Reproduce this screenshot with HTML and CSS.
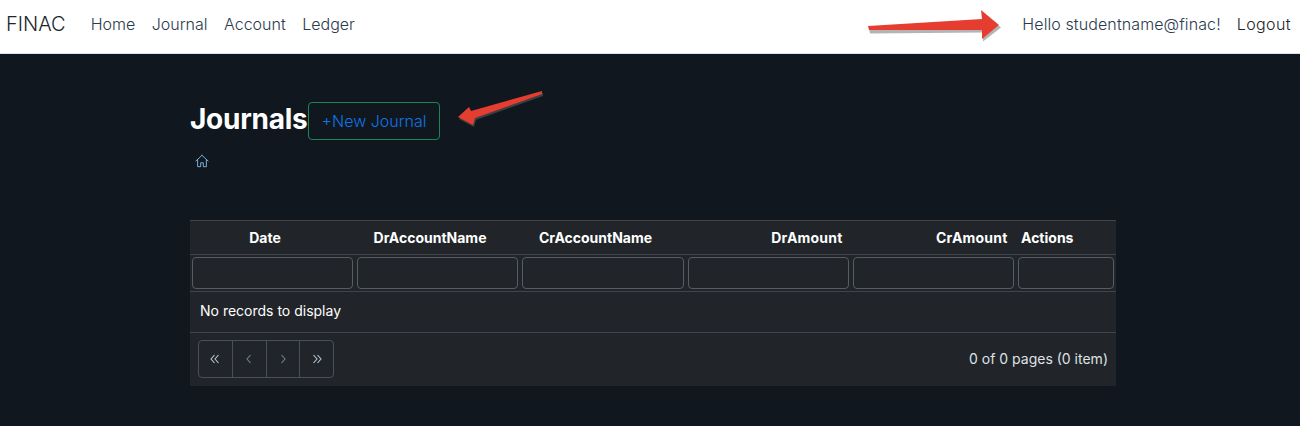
FILE: index.html
```html
<!DOCTYPE html>
<html lang="en">
<head>
<meta charset="utf-8">
<title>Journals</title>
<link rel="stylesheet" href="styles.css">
</head>
<body>
<nav class="navbar">
  <a class="brand">FINAC</a>
  <ul class="nav-links">
    <li>Home</li>
    <li>Journal</li>
    <li>Account</li>
    <li>Ledger</li>
  </ul>
  <div class="nav-right">
    <span class="hello">Hello studentname@finac!</span>
    <span class="logout">Logout</span>
  </div>
</nav>
<main class="content">
  <div class="title-row">
    <h1 class="title">Journals</h1>
    <button class="new-btn">+New Journal</button>
  </div>
  <div class="crumb">
    <svg class="home-icon" viewBox="0 0 16 16" width="14" height="14"><path d="M8 1.5 L1 8 M8 1.5 L15 8 M3 6.5 V14.5 H6.5 V10 H9.5 V14.5 H13 V6.5" fill="none" stroke="#7db4e0" stroke-width="1.1" stroke-linejoin="round" stroke-linecap="round"/></svg>
  </div>
  <div class="grid">
    <table class="data">
      <colgroup>
        <col class="c-wide"><col class="c-wide"><col class="c-mid"><col class="c-wide"><col class="c-wide"><col class="c-act">
      </colgroup>
      <thead>
        <tr class="head">
          <th class="center">Date</th>
          <th class="center">DrAccountName</th>
          <th class="center">CrAccountName</th>
          <th class="right">DrAmount</th>
          <th class="right">CrAmount</th>
          <th class="left">Actions</th>
        </tr>
        <tr class="filters">
          <td><input class="filter" aria-label="Date"></td>
          <td><input class="filter" aria-label="DrAccountName"></td>
          <td><input class="filter" aria-label="CrAccountName"></td>
          <td><input class="filter" aria-label="DrAmount"></td>
          <td><input class="filter" aria-label="CrAmount"></td>
          <td><input class="filter" aria-label="Actions"></td>
        </tr>
      </thead>
      <tbody>
        <tr class="empty"><td colspan="6">No records to display</td></tr>
      </tbody>
    </table>
    <div class="pager">
      <div class="pages">
        <button class="page strong"><svg viewBox="0 0 12 12" width="12" height="12"><path d="M5.5 2 L2 6 L5.5 10 M9.5 2 L6 6 L9.5 10" /></svg></button>
        <button class="page dim"><svg viewBox="0 0 12 12" width="12" height="12"><path d="M7.5 2 L4 6 L7.5 10" /></svg></button>
        <button class="page dim"><svg viewBox="0 0 12 12" width="12" height="12"><path d="M4.5 2 L8 6 L4.5 10" /></svg></button>
        <button class="page strong"><svg viewBox="0 0 12 12" width="12" height="12"><path d="M2.5 2 L6 6 L2.5 10 M6.5 2 L10 6 L6.5 10" /></svg></button>
      </div>
      <span class="summary">0 of 0 pages (0 item)</span>
    </div>
  </div>
</main>
<svg class="arrow arrow-top" viewBox="0 0 140 42" width="140" height="42"><path d="M0 26 L114 19 L113 10 L132 25 L114 39 L114 30 L1 31 Z" fill="#8c8c8c" opacity=".65" transform="translate(1 1.5)"/><path d="M0 25 L114 18 L113 9 L131 24 L114 38 L114 29 L1 29 Z" fill="#e53e30"/></svg>
<svg class="arrow arrow-mid" viewBox="0 0 90 42" width="90" height="42"><path d="M0 27 L11 17 L13 21 L84 1 L84 4 L17 28 L15 35 Z" fill="#5a5a5a" opacity=".6" transform="translate(1 2)"/><path d="M0 27 L11 17 L13 21 L84 1 L84 4 L17 28 L15 35 Z" fill="#e53e30"/></svg>
</body>
</html>
```
FILE: styles.css
```css
* { box-sizing: border-box; }
html, body { margin: 0; height: 100%; }
body {
  background: #11171f;
  color: #fff;
  font-family: Inter, "Liberation Sans", sans-serif;
  font-size: 16px;
  font-weight: 300;
  position: relative;
  overflow: hidden;
}
.navbar {
  display: flex;
  align-items: center;
  height: 54px;
  background: #fff;
  border-bottom: 1px solid #dee2e6;
  padding: 0 9px 6px 6px;
  color: #212529;
}
.brand { font-size: 20px; margin-right: 25px; color: #212529; }
.nav-links {
  display: flex;
  gap: 16.5px;
  list-style: none;
  margin: 0;
  padding: 0;
  color: #2b3a4d;
}
.nav-right { margin-left: auto; display: flex; gap: 16px; }
.hello { color: #2b3a4d; letter-spacing: .1px; }
.logout { color: #212529; letter-spacing: .4px; }
.content { padding: 48px 184px 0 190px; }
.title-row { display: flex; align-items: center; height: 38px; }
.title { margin: -4px 0 0; font-size: 28px; font-weight: 700; line-height: 34px; letter-spacing: -.25px; }
.new-btn {
  width: 132px;
  height: 38px;
  background: transparent;
  border: 1px solid #198754;
  border-radius: 4px;
  color: #0f74e6;
  font: inherit;
  padding: 0 0 0 1px;
}
.crumb { height: 80px; padding: 14px 0 0 5px; }
.home-icon { display: block; }
.grid { background: #212529; width: 926px; }
.data { width: 926px; table-layout: fixed; border-collapse: collapse; }
.c-wide { width: 165px; }
.c-mid { width: 166px; }
.c-act { width: 100px; }
.head th {
  height: 34px;
  font-size: 14px;
  font-weight: 700;
  padding: 0;
  border-top: 1px solid #3f454b;
  border-bottom: 1px solid #3f454b;
}
.center { text-align: center; padding-right: 15px !important; }
.right { text-align: right; padding-right: 8.5px !important; letter-spacing: .2px; }
.left { text-align: left; padding-left: 5px !important; }
.filters td { height: 36px; padding: 2px; border-bottom: 1px solid #3f454b; }
.filter {
  display: block;
  width: 100%;
  height: 32px;
  background: #212529;
  border: 1px solid #565c62;
  border-radius: 4px;
  padding: 0;
}
.empty td { height: 41px; padding: 0 10px 3px; font-size: 14px; font-weight: 400; border-bottom: 1px solid #3f454b; }
.pager {
  display: flex;
  align-items: center;
  justify-content: space-between;
  height: 53px;
  padding: 0 8px 1px;
}
.pages {
  display: flex;
  width: 136px;
  height: 38px;
  border: 1px solid #495057;
  border-radius: 4px;
}
.page {
  flex: 1;
  display: flex;
  align-items: center;
  justify-content: center;
  background: transparent;
  border: 0;
  border-left: 1px solid #495057;
  padding: 0;
}
.page:first-child { border-left: 0; }
.page svg { fill: none; stroke-width: 1.1; }
.strong svg { stroke: #b4c6d6; }
.dim svg { stroke: #76808a; }
.summary { font-size: 14px; font-weight: 400; color: #dee2e6; margin-bottom: 1px; }
.arrow { position: absolute; display: block; }
.arrow-top { left: 868px; top: 1px; }
.arrow-mid { left: 458px; top: 90px; }
```
